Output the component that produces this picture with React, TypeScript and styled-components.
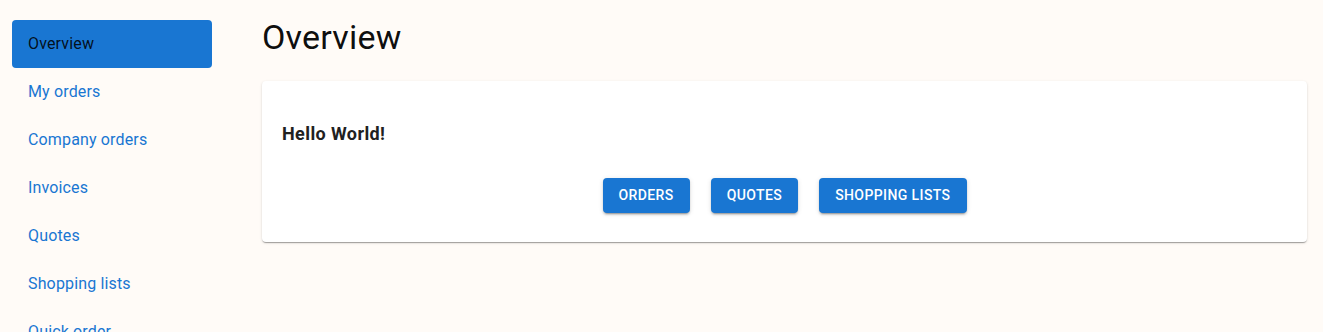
import React from "react";
import styled, { createGlobalStyle } from "styled-components";

const Global = createGlobalStyle`
  html, body { margin: 0; padding: 0; background: #fffbf7; }
  body { font-family: Roboto, "Noto Sans", sans-serif; }
`;

const Layout = styled.div`
  display: flex;
  gap: 50px;
  padding: 20px 16px 0 12px;
  height: 332px;
  box-sizing: border-box;
  overflow: hidden;
`;

const Nav = styled.nav`
  width: 200px;
  flex: none;
  display: flex;
  flex-direction: column;
`;

const NavItem = styled.a<{ $active?: boolean }>`
  display: flex;
  align-items: center;
  height: 48px;
  padding: 0 16px;
  border-radius: 4px;
  font-size: 16px;
  line-height: 1.5;
  letter-spacing: 0.15px;
  text-decoration: none;
  color: ${(p) => (p.$active ? "rgba(0,0,0,0.87)" : "#1976d2")};
  background: ${(p) => (p.$active ? "#1976d2" : "transparent")};
  flex: none;
`;

const Main = styled.main`
  flex: 1;
  display: flex;
  flex-direction: column;
  margin-top: -4px;
`;

const Title = styled.h1`
  margin: 0 0 23px;
  font-size: 34px;
  font-weight: 400;
  line-height: 42px;
  color: rgba(0,0,0,0.95);
  letter-spacing: 0.2px;
`;

const Card = styled.section`
  background: #fff;
  border-radius: 4px;
  box-shadow: 0px 2px 1px -1px rgba(0,0,0,0.2), 0px 1px 1px 0px rgba(0,0,0,0.14), 0px 1px 3px 0px rgba(0,0,0,0.12);
  padding: 40px 20px 29px;
  display: flex;
  flex-direction: column;
`;

const Heading = styled.h2`
  margin: 0 0 31px;
  font-size: 18px;
  font-weight: 700;
  line-height: 26px;
  letter-spacing: 0.4px;
  color: #212121;
`;

const Actions = styled.div`
  display: flex;
  justify-content: center;
  gap: 21px;
`;

const Button = styled.button`
  font-family: Roboto, sans-serif;
  font-size: 14px;
  font-weight: 500;
  letter-spacing: 0.4px;
  text-transform: uppercase;
  line-height: 23px;
  padding: 6px 16px;
  border: none;
  border-radius: 4px;
  background: #1976d2;
  color: #fff;
  box-shadow: 0px 3px 1px -2px rgba(0,0,0,0.2), 0px 2px 2px 0px rgba(0,0,0,0.14), 0px 1px 5px 0px rgba(0,0,0,0.12);
  cursor: pointer;
`;

const items = ["Overview", "My orders", "Company orders", "Invoices", "Quotes", "Shopping lists", "Quick order"];

export default function App() {
  return (
    <>
      <Global />
      <Layout>
        <Nav>
          {items.map((it, i) => (
            <NavItem key={it} href="#" $active={i === 0}>{it}</NavItem>
          ))}
        </Nav>
        <Main>
          <Title>Overview</Title>
          <Card>
            <Heading>Hello World!</Heading>
            <Actions>
              <Button>Orders</Button>
              <Button>Quotes</Button>
              <Button>Shopping lists</Button>
            </Actions>
          </Card>
        </Main>
      </Layout>
    </>
  );
}
